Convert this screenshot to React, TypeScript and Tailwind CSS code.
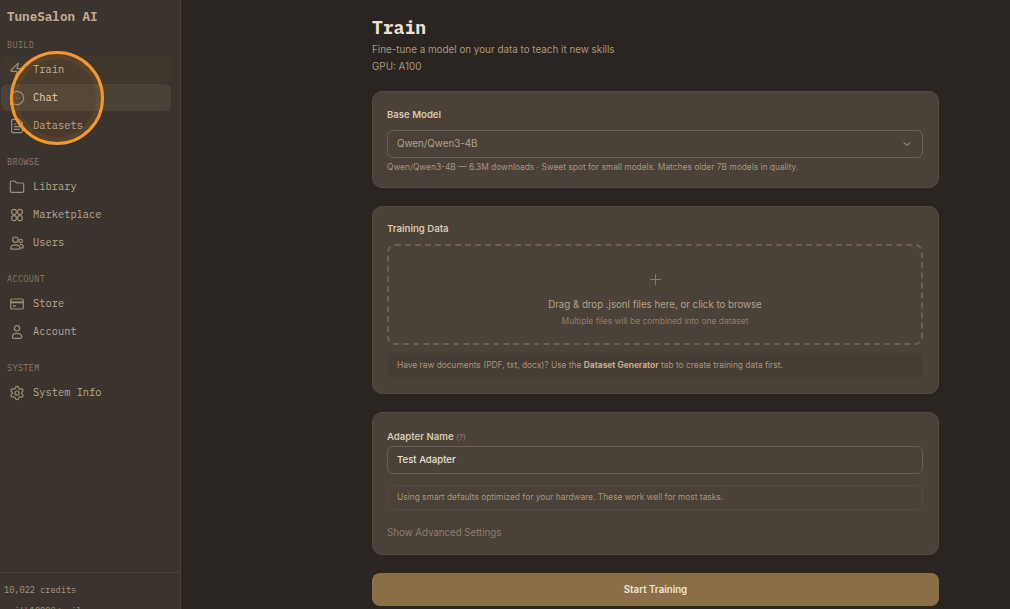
import { ChevronDown, Zap, MessageCircleMore, FileText, Folder, Settings, Plus } from "lucide-react";

const mono = "font-['IBM_Plex_Mono','Liberation_Mono',monospace]";

function MarketIcon(props: { className?: string }) {
	return (
		<svg width={16} height={16} viewBox="0 0 24 24" fill="none" stroke="currentColor" strokeWidth={1.8} {...props}>
			<rect x="4" y="3.5" width="7" height="7.5" rx="3.2" />
			<rect x="13" y="3.5" width="7" height="7.5" rx="3.2" />
			<rect x="4" y="13" width="7" height="7.5" rx="3.2" />
			<rect x="13" y="13" width="7" height="7.5" rx="3.2" />
		</svg>
	);
}

function UsersIcon(props: { className?: string }) {
	return (
		<svg width={16} height={16} viewBox="0 0 24 24" fill="none" stroke="currentColor" strokeWidth={1.8} {...props}>
			<circle cx="9.5" cy="7" r="4" />
			<circle cx="17.5" cy="9" r="2.6" />
			<path d="M2.5 20.5c0-3.6 2.6-5.800 7-5.800s7 2.200 7 5.800c0 .4-.3.6-.7.6H3.200c-.4 0-.7-.2-.7-.6Z" />
			<path d="M16.5 14.200c3 0 5 1.500 5 4.300 0 .6-.4.9-1 .9h-3.200" />
		</svg>
	);
}

function StoreIcon(props: { className?: string }) {
	return (
		<svg width={16} height={16} viewBox="0 0 24 24" fill="none" stroke="currentColor" strokeWidth={1.8} {...props}>
			<rect x="2.500" y="4.500" width="19" height="15" rx="2" />
			<path d="M2.500 9.500h19" strokeWidth={3} />
			<path d="M6 15h4" strokeWidth={2.200} />
		</svg>
	);
}

function AccountIcon(props: { className?: string }) {
	return (
		<svg width={16} height={16} viewBox="0 0 24 24" fill="none" stroke="currentColor" strokeWidth={1.8} {...props}>
			<circle cx="12" cy="6.500" r="4" />
			<path d="M5 19c0-3.200 2.600-5 7-5s7 1.800 7 5c0 1.600-1.200 2.500-2.800 2.500H7.800C6.200 21.500 5 20.600 5 19Z" />
		</svg>
	);
}

const groups = [
	{
		title: "BUILD",
		items: [
			{ label: "Train", icon: Zap, hover: true },
			{ label: "Chat", icon: MessageCircleMore, active: true },
			{ label: "Datasets", icon: FileText },
		],
	},
	{
		title: "BROWSE",
		items: [
			{ label: "Library", icon: Folder },
			{ label: "Marketplace", icon: MarketIcon },
			{ label: "Users", icon: UsersIcon },
		],
	},
	{
		title: "ACCOUNT",
		items: [
			{ label: "Store", icon: StoreIcon },
			{ label: "Account", icon: AccountIcon },
		],
	},
	{
		title: "SYSTEM",
		items: [{ label: "System Info", icon: Settings }],
	},
];

function Sidebar() {
	return (
		<aside className={`relative flex h-[609px] w-[181px] shrink-0 flex-col border-r border-[#4a4139] bg-[#3b332d] ${mono}`}>
			<div className="px-[7px] pt-[8px] text-[12.6px] font-bold leading-[16px] text-[#bfa98c]">TuneSalon AI</div>
			<nav className="flex-1">
				{groups.map((group, i) => (
					<div key={group.title} className={i == 0 ? "mt-[15px]" : "mt-[16px]"}>
						<div className="px-[7px] text-[8.6px] leading-[12px] tracking-[0.3px] text-[#8a7b68]">{group.title}</div>
						<div className="mt-[5px] flex flex-col">
							{group.items.map((item) => (
								<NavRow key={item.label} {...item} />
							))}
						</div>
					</div>
				))}
			</nav>
			<div className="h-[37px] border-t border-[#4a4139] px-[4px] pt-[11px] text-[8.6px] leading-[12px] text-[#a8967e]">
				<div>10,022 credits</div>
				<div className="mt-[9px]">smith1998@gmail.com</div>
			</div>
			{/* tutorial highlight */}
			<div className="absolute left-[10px] top-[51px] h-[94px] w-[94px] rounded-full border-[3px] border-[#f5972d] bg-[#f0962e]/[0.07] shadow-[inset_0_0_0_5px_rgba(240,150,46,0.08)]" />
		</aside>
	);
}

function NavRow({ label, icon: Icon, active, hover }: { label: string; icon: React.ElementType; active?: boolean; hover?: boolean }) {
	return (
		<div
			className={`mb-px ml-px flex h-[27px] w-[170px] items-center gap-[8px] rounded-[6px] pl-[8px] text-[10.4px] ${
				active ? "bg-[#4a4239] text-[#e6d8c3]" : hover ? "bg-[#3f362e] text-[#c4b49a]" : "text-[#b8a88f]"
			}`}>
			<Icon size={16} strokeWidth={1.8} className="text-[#9c8c76]" />
			<span>{label}</span>
		</div>
	);
}

function Card({ children, className }: { children: React.ReactNode; className?: string }) {
	return <section className={`rounded-[10px] border border-[#534a40] bg-[#4a4139] pl-[14px] pr-[15px] ${className}`}>{children}</section>;
}

export default function App() {
	return (
		<div className="flex h-[609px] w-[1010px] overflow-hidden bg-[#2a2520] font-['Inter',sans-serif]">
			<Sidebar />
			<main className="flex-1 overflow-hidden pl-[191px] pr-[71px]">
				<h1 className={`mt-[18px] text-[18px] font-bold leading-[20px] text-[#ece2d2] ${mono}`}>Train</h1>
				<p className="mt-[3px] text-[9.85px] leading-[17px] text-[#a8967e]">Fine-tune a model on your data to teach it new skills</p>
				<p className="text-[9.85px] leading-[17px] text-[#a8967e]">GPU: A100</p>

				<Card className="mt-[16px] h-[97px] pt-[16px]">
					<label className="block text-[9.6px] font-semibold leading-[14px] text-[#d8c8ae]">Base Model</label>
					<div className="mt-[8px] flex h-[28px] items-center justify-between rounded-[6px] border border-[#6b5f50] px-[9px] text-[9.8px] text-[#b3a28a]">
						Qwen/Qwen3-4B
						<ChevronDown size={12} className="text-[#b3a28a]" />
					</div>
					<p className="mt-[2px] text-[8.4px] leading-[14px] text-[#a8967e]">
						Qwen/Qwen3-4B — 6.3M downloads · Sweet spot for small models. Matches older 7B models in quality.
					</p>
				</Card>

				<Card className="mt-[18px] h-[188px] pt-[15px]">
					<label className="block text-[9.6px] font-semibold leading-[14px] text-[#d8c8ae]">Training Data</label>
					<div className="mt-[8px] flex h-[101px] flex-col items-center justify-center rounded-[8px] border-2 border-dashed border-[#6b5f50] pt-[8px]">
						<Plus size={17} strokeWidth={1.3} className="text-[#8f7f6b]" />
						<p className="mt-[10px] text-[9.7px] leading-[14px] text-[#b3a28a]">Drag &amp; drop .jsonl files here, or click to browse</p>
						<p className="mt-[3px] text-[8.45px] leading-[12px] text-[#8f7f6b]">Multiple files will be combined into one dataset</p>
					</div>
					<div className="ml-px mt-[8px] flex h-[24px] items-center rounded-[4px] bg-[#453c33] px-[9px] text-[8.4px] text-[#a8967e]">
						<span>
							Have raw documents (PDF, txt, docx)? Use the <b className="text-[#c4ab8b]">Dataset Generator</b> tab to create training data first.
						</span>
					</div>
				</Card>

				<Card className="mt-[18px] h-[143px] pt-[17px]">
					<label className="block text-[9.6px] font-semibold leading-[14px] text-[#d8c8ae]">
						Adapter Name <span className="text-[8px] font-normal text-[#8f7f6b]">(?)</span>
					</label>
					<div className="mt-[2px] flex h-[28px] items-center rounded-[6px] border border-[#6b5f50] px-[9px] text-[9.6px] font-medium text-[#ece2d2]">
						Test Adapter
					</div>
					<div className="mt-[11px] flex h-[25px] items-center rounded-[6px] border border-[#534a40] px-[9px] text-[8.4px] text-[#a8967e]">
						Using smart defaults optimized for your hardware. These work well for most tasks.
					</div>
					<p className="mt-[16px] text-[9.7px] leading-[14px] text-[#8f7f6b]">Show Advanced Settings</p>
				</Card>

				<button className="mt-[18px] h-[33px] w-full rounded-[8px] bg-[#8b6f47] pt-px text-[9.7px] font-semibold text-[#f0e6d6]">Start Training</button>
			</main>
		</div>
	);
}
